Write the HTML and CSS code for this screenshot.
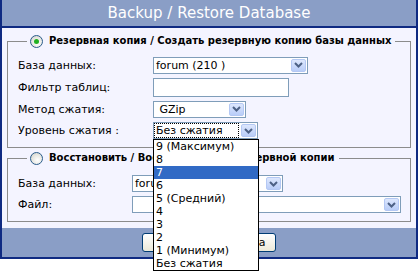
FILE: index.html
```html
<!DOCTYPE html>
<html lang="ru">
<head>
    <meta charset="UTF-8">
    <title>Backup / Restore Database</title>
    <link rel="stylesheet" href="styles.css">
</head>
<body>
    <div class="frame">
        <div class="title">Backup / Restore Database</div>

        <div class="content">
            <fieldset class="box box-backup">
                <legend><span class="radio checked"></span>Резервная копия / Создать резервную копию базы данных</legend>
                <div class="rows">
                    <span class="label">База данных:</span>
                    <span class="select w-db"><span class="value">forum (210 )</span><span class="arrow"><svg width="9" height="6" viewBox="0 0 9 6"><path d="M1 1 L4.5 4.5 L8 1" fill="none" stroke="#4d6185" stroke-width="2"/></svg></span></span>

                    <span class="label">Фильтр таблиц:</span>
                    <span class="input w-filter"></span>

                    <span class="label">Метод сжатия:</span>
                    <span class="select w-method"><span class="value">&nbsp;GZip</span><span class="arrow"><svg width="9" height="6" viewBox="0 0 9 6"><path d="M1 1 L4.5 4.5 L8 1" fill="none" stroke="#4d6185" stroke-width="2"/></svg></span></span>

                    <span class="label">Уровень сжатия :</span>
                    <span class="select w-level open"><span class="value focus">Без сжатия</span><span class="arrow"><svg width="9" height="6" viewBox="0 0 9 6"><path d="M1 1 L4.5 4.5 L8 1" fill="none" stroke="#4d6185" stroke-width="2"/></svg></span>
                        <span class="dropdown">
                            <span class="item">9 (Максимум)</span>
                            <span class="item">8</span>
                            <span class="item active">7</span>
                            <span class="item">6</span>
                            <span class="item">5 (Средний)</span>
                            <span class="item">4</span>
                            <span class="item">3</span>
                            <span class="item">2</span>
                            <span class="item">1 (Минимум)</span>
                            <span class="item">Без сжатия</span>
                        </span>
                    </span>
                </div>
            </fieldset>

            <fieldset class="box box-restore">
                <legend><span class="radio"></span>Восстановить / Восстановить из резервной копии</legend>
                <div class="rows">
                    <span class="label">База данных:</span>
                    <span class="select w-db2"><span class="value">forum (210 )</span><span class="arrow"><svg width="9" height="6" viewBox="0 0 9 6"><path d="M1 1 L4.5 4.5 L8 1" fill="none" stroke="#4d6185" stroke-width="2"/></svg></span></span>

                    <span class="label">Файл:</span>
                    <span class="select w-file"><span class="value"></span><span class="arrow"><svg width="9" height="6" viewBox="0 0 9 6"><path d="M1 1 L4.5 4.5 L8 1" fill="none" stroke="#4d6185" stroke-width="2"/></svg></span></span>
                </div>
            </fieldset>
        </div>

        <div class="footer">
            <button class="btn">Начать</button>
            <button class="btn">Отмена</button>
        </div>
    </div>
</body>
</html>
```

FILE: styles.css
```css
body {
    margin: 0;
    min-height: 275px;
    background: #fff;
    font-family: "DejaVu Sans", Verdana, sans-serif;
    font-size: 11px;
    color: #000;
}
.frame {
    width: 418px;
    box-sizing: border-box;
    border: 2px solid #0f2a82;
    border-top: 0;
}
.title {
    height: 26px;
    line-height: 26px;
    background: #8a9ec6;
    border-bottom: 2px solid #0f2a82;
    color: #fff;
    text-align: center;
    font-size: 15px;
}
.content {
    background: #f4f4ff;
    padding: 6px 5px 6px 5px;
}
.box {
    margin: 0;
    padding: 0 10px 6px 10px;
    border: 1px solid #8c8c8c;
    min-width: 0;
}
.box-restore {
    margin-top: 3px;
    padding-bottom: 6px;
}
legend {
    margin-left: 9px;
    padding: 0 4px 0 3px;
    font-weight: bold;
    font-size: 10px;
    height: 14px;
    line-height: 14px;
    display: flex;
    align-items: center;
}
.radio {
    display: inline-block;
    width: 11px;
    height: 11px;
    border: 1px solid #2a5c8c;
    border-radius: 50%;
    background: radial-gradient(circle at 60% 65%, #ffffff 0%, #e6e6e0 55%, #c8c8c0 100%);
    margin-right: 6px;
    position: relative;
}
.radio.checked::after {
    content: "";
    position: absolute;
    left: 3px;
    top: 3px;
    width: 5px;
    height: 5px;
    border-radius: 50%;
    background: #21b021;
}
.rows {
    display: grid;
    align-items: center;
    margin-top: 6px;
}
.box-backup .rows {
    grid-template-columns: 135px 1fr;
    grid-template-rows: 22px 22px 22px 21px;
}
.box-restore .rows {
    grid-template-columns: 114px 1fr;
    grid-auto-rows: 21px;
    margin-top: 8px;
}
.label { white-space: nowrap; }

.select, .input {
    display: flex;
    align-items: center;
    box-sizing: border-box;
    height: 17px;
    border: 1px solid #7f9db9;
    background: #fff;
    position: relative;
}
.input { height: 19px; }
.select .value {
    flex: 1;
    padding-left: 2px;
    white-space: nowrap;
    overflow: hidden;
    line-height: 13px;
}
.select .value.focus {
    margin: 1px 2px 1px 1px;
    padding-left: 1px;
    outline: 1px dotted #000;
}
.arrow {
    width: 15px;
    height: 13px;
    margin: 1px;
    box-sizing: border-box;
    border: 1px solid #b4c8f4;
    border-radius: 2px;
    background: linear-gradient(#dde7fd, #b9cdf8);
    display: flex;
    align-items: center;
    justify-content: center;
}
.w-db { width: 155px; }
.w-filter { width: 136px; }
.w-method { width: 93px; }
.w-level { width: 105px; }
.w-db2 { width: 151px; }
.w-file { width: 269px; }

.dropdown {
    position: absolute;
    left: -1px;
    top: 16px;
    width: 106px;
    box-sizing: border-box;
    border: 1px solid #000;
    background: #fff;
    display: block;
    z-index: 5;
}
.item {
    display: block;
    height: 13px;
    line-height: 13px;
    padding-left: 2px;
    white-space: nowrap;
}
.item.active {
    background: #316ac5;
    color: #fff;
}

.footer {
    height: 29px;
    background: #8a9ec6;
    display: flex;
    justify-content: center;
    align-items: center;
    gap: 4px;
}
.btn {
    width: 65px;
    height: 19px;
    padding: 0;
    font-family: "DejaVu Sans", Verdana, sans-serif;
    font-size: 11px;
    color: #000;
    border: 1px solid #003c74;
    border-radius: 3px;
    background: linear-gradient(#ffffff, #ece9d8);
}
```
